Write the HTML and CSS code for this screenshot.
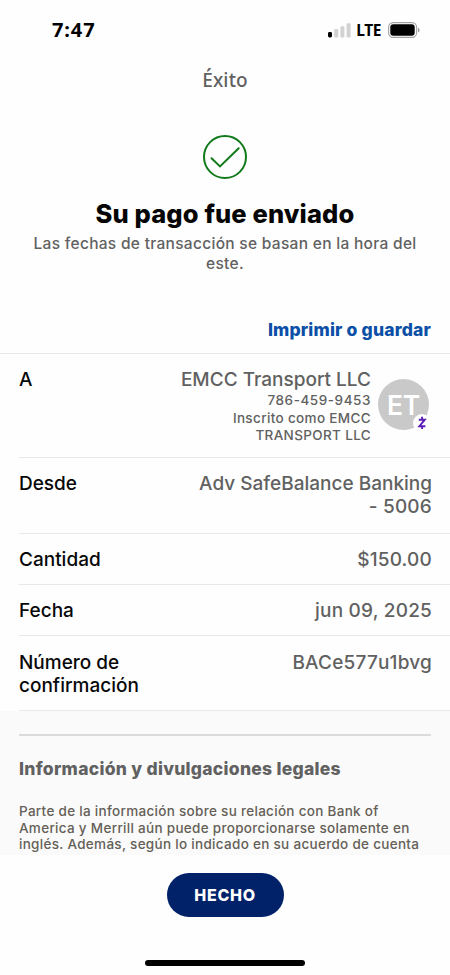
FILE: index.html
```html
<!DOCTYPE html>
<html lang="es">
<head>
<meta charset="utf-8">
<title>Éxito</title>
<link rel="stylesheet" href="styles.css">
</head>
<body>
<div class="screen">
  <header class="status">
    <span class="time">7:47</span>
    <div class="indicators">
      <svg class="signal" width="23" height="15" viewBox="0 0 23 15">
        <rect x="0" y="9" width="4" height="5.5" rx="1.4" fill="#000"/>
        <rect x="6.2" y="6" width="4" height="8.5" rx="1.2" fill="#d2d2d2"/>
        <rect x="12.4" y="3.2" width="4" height="11.3" rx="1.2" fill="#d2d2d2"/>
        <rect x="18.6" y="0.3" width="4" height="14.2" rx="1.2" fill="#d2d2d2"/>
      </svg>
      <span class="network">LTE</span>
      <svg class="battery" width="32" height="16" viewBox="0 0 32 16">
        <rect x="0.6" y="0.6" width="28" height="14.8" rx="4.6" fill="none" stroke="#a2a2a2" stroke-width="1.1"/>
        <rect x="2.3" y="2.3" width="24.4" height="11.4" rx="3" fill="#000"/>
        <path d="M30 5.4q1.6 1 1.6 2.6t-1.6 2.6z" fill="#999"/>
      </svg>
    </div>
  </header>
  <h1 class="nav-title">Éxito</h1>
  <section class="hero">
    <svg class="check" width="46" height="46" viewBox="0 0 46 46" fill="none" stroke="#117a1a" stroke-width="2">
      <circle cx="23" cy="23" r="21"/>
      <path d="M9.5 24.2l8.5 8.2L36.7 14.2" stroke-linecap="round"/>
    </svg>
    <h2 class="headline">Su pago fue enviado</h2>
    <p class="note">Las fechas de transacción se basan en la hora del<br>este.</p>
  </section>
  <div class="actions"><a class="print">Imprimir o guardar</a></div>
  <dl class="details">
    <div class="row row-payee">
      <dt>A</dt>
      <dd class="payee">
        <div class="payee-text">
          <div class="payee-name">EMCC Transport LLC</div>
          <div class="payee-phone">786-459-9453</div>
          <div class="payee-alias">Inscrito como EMCC<br>TRANSPORT LLC</div>
        </div>
        <div class="avatar"><span class="initials">ET</span>
          <svg class="badge" width="18" height="18" viewBox="0 0 18 18">
            <circle cx="9" cy="9" r="9" fill="#fff"/>
            <path d="M5.8 5.7h6L6.4 12.2h6M9.1 2.8v2.9M9.1 12.2v2.9" fill="none" stroke="#5a1eb4" stroke-width="1.9"/>
          </svg>
        </div>
      </dd>
    </div>
    <div class="row row-from"><dt>Desde</dt><dd class="from">Adv SafeBalance Banking<br><span class="numeric">- 5006</span></dd></div>
    <div class="row row-single"><dt>Cantidad</dt><dd class="numeric">$150.00</dd></div>
    <div class="row row-single"><dt>Fecha</dt><dd class="numeric">jun 09, 2025</dd></div>
    <div class="row row-confirm"><dt>Número de<br>confirmación</dt><dd class="numeric">BACe577u1bvg</dd></div>
  </dl>
  <section class="legal">
    <h3>Información y divulgaciones legales</h3>
    <p>Parte de la información sobre su relación con Bank of<br>America y Merrill aún puede proporcionarse solamente en<br>inglés. Además, según lo indicado en su acuerdo de cuenta</p>
  </section>
  <footer class="bottom">
    <button class="done">HECHO</button>
    <div class="home-bar"></div>
  </footer>
</div>
</body>
</html>
```

FILE: styles.css
```css
* { box-sizing: border-box; margin: 0; padding: 0; }
body { background: #fefefe; font-family: Inter, "Liberation Sans", sans-serif; color: #616161; }
.screen { width: 450px; height: 975px; overflow: hidden; display: flex; flex-direction: column; }
.screen > * { flex: none; }

.status { height: 60px; padding: 1px 30px 0 52px; display: flex; align-items: center; justify-content: space-between; color: #000; }
.time { font: 700 20px/24px "Noto Sans", sans-serif; letter-spacing: .9px; margin-top: -1px; }
.indicators { display: flex; align-items: center; }
.signal { margin-top: -1px; }
.network { font: 700 15.5px/20px "Noto Sans", sans-serif; letter-spacing: -.4px; margin: -1px 7px 0 5px; }
.battery { margin-top: -1px; }

.nav-title { height: 40px; font: 500 19px/41px "Noto Sans", sans-serif; letter-spacing: .15px; text-align: center; color: #616161; }

.hero { height: 210px; padding-top: 34px; display: flex; flex-direction: column; align-items: center; text-align: center; }
.headline { margin-top: 18px; font-size: 25.5px; line-height: 32px; font-weight: 800; letter-spacing: .13px; color: #050505; white-space: nowrap; }
.note { margin-top: 4px; font-size: 15.5px; line-height: 19.5px; font-weight: 500; letter-spacing: .3px; white-space: nowrap; }

.actions { height: 43px; padding: 10px 19px 0 0; text-align: right; }
.print { font-size: 17.5px; line-height: 20px; font-weight: 800; letter-spacing: .17px; color: #0b4fa6; }

.details { border-top: 1px solid #e8e8e8; }
.row { margin-left: 19px; padding: 14px 18px 0 0; display: flex; justify-content: space-between; border-bottom: 1px solid #e9e9e9; font-size: 19px; line-height: 23px; font-weight: 500; white-space: nowrap; }
.row dt { color: #080808; }
.row dd { text-align: right; }
.row .numeric { letter-spacing: .2px; }
.row-payee { height: 104px; }
.row-from { height: 76px; }
.row-single { height: 51px; }
.row-confirm { height: 75px; padding-top: 15px; }

.payee { display: flex; gap: 7px; margin-right: 3px; }
.payee-phone { font-size: 13.5px; line-height: 18px; letter-spacing: .55px; }
.payee-alias { font-size: 13.5px; line-height: 16.5px; letter-spacing: .35px; margin-top: 1px; }
.avatar { position: relative; width: 51px; height: 51px; margin-top: 11px; border-radius: 50%; background: #c9c9c9; color: #fff; text-align: center; }
.initials { font-size: 26.5px; line-height: 52px; font-weight: 600; letter-spacing: -.3px; }
.badge { position: absolute; right: -2px; bottom: -2px; }

.legal { height: 144px; padding: 23px 19px 0; background: #fafafa; overflow: hidden; white-space: nowrap; }
.legal h3 { border-top: 2px solid #d9dcda; padding-top: 21px; font-size: 17.5px; line-height: 24px; font-weight: 800; letter-spacing: .28px; color: #616161; }
.legal p { margin-top: 22px; font-size: 13.5px; line-height: 16.7px; font-weight: 500; letter-spacing: .3px; color: #655f57; }

.bottom { flex: 1; padding-top: 18px; display: flex; flex-direction: column; align-items: center; }
.done { width: 117px; height: 44px; border: 0; border-radius: 22px; background: #012169; color: #fff; font: 800 16px/44px Inter, sans-serif; letter-spacing: .7px; }
.home-bar { width: 160px; height: 6px; margin-top: 43px; border-radius: 3px; background: #000; }
```
